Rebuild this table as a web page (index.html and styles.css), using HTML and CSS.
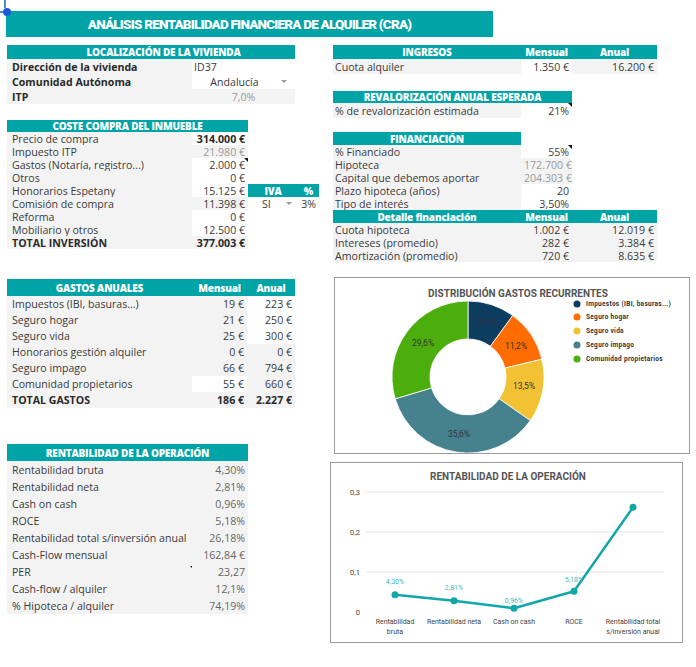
FILE: index.html
```html
<!DOCTYPE html>
<html lang="es">
<head>
  <meta charset="UTF-8">
  <title>Análisis rentabilidad alquiler</title>
  <link rel="stylesheet" href="styles.css">
</head>
<body>
<div class="sheet">
  <!-- selection handle -->
  <svg class="handle" width="14" height="18" viewBox="0 0 14 18">
    <line x1="5" y1="0" x2="5" y2="8" stroke="#1b5ad6" stroke-width="1.5"/>
    <line x1="0" y1="12" x2="3" y2="12" stroke="#1b5ad6" stroke-width="1.5"/>
    <circle cx="7" cy="12" r="4" fill="#1b5ad6"/>
  </svg>

  <h1 class="title">ANÁLISIS RENTABILIDAD FINANCIERA DE ALQUILER (CRA)</h1>

  <div class="main">
    <!-- Left column -->
    <div class="col-left">
      <table class="tbl loc">
        <colgroup><col style="width:185px"><col style="width:103px"></colgroup>
        <tr class="hd"><th colspan="2" class="shift">LOCALIZACIÓN DE LA VIVIENDA</th></tr>
        <tr><td class="lbl bold">Dirección de la vivienda</td><td class="in">ID37</td></tr>
        <tr><td class="lbl bold">Comunidad Autónoma</td><td class="in"><div class="dropdown"><span>Andalucía</span><i class="caret"></i></div></td></tr>
        <tr><td class="lbl bold">ITP</td><td class="calc mid faint">7,0%</td></tr>
      </table>

      <table class="tbl coste">
        <colgroup><col style="width:185px"><col style="width:56px"><col style="width:50px"><col style="width:21px"></colgroup>
        <tr class="hd"><th colspan="2">COSTE COMPRA DEL INMUEBLE</th><td class="blank"></td><td class="blank"></td></tr>
        <tr><td class="lbl">Precio de compra</td><td class="in num bold">314.000 €</td><td class="blank"></td><td class="blank"></td></tr>
        <tr><td class="lbl">Impuesto ITP</td><td class="calc num faint">21.980 €</td><td class="blank"></td><td class="blank"></td></tr>
        <tr><td class="lbl">Gastos (Notaría, registro...)</td><td class="in num note">2.000 €</td><td class="blank"></td><td class="blank"></td></tr>
        <tr><td class="lbl">Otros</td><td class="in num">0 €</td><td class="blank"></td><td class="blank"></td></tr>
        <tr><td class="lbl">Honorarios Espetany</td><td class="in num">15.125 €</td><th>IVA</th><th>%</th></tr>
        <tr><td class="lbl">Comisión de compra</td><td class="calc num">11.398 €</td><td class="blank"><div class="dropdown iva"><span>SI</span><i class="caret"></i></div></td><td class="blank num">3%</td></tr>
        <tr><td class="lbl">Reforma</td><td class="in num">0 €</td><td class="blank"></td><td class="blank"></td></tr>
        <tr><td class="lbl">Mobiliario y otros</td><td class="in num">12.500 €</td><td class="blank"></td><td class="blank"></td></tr>
        <tr><td class="lbl bold">TOTAL INVERSIÓN</td><td class="calc num bold">377.003 €</td><td class="blank"></td><td class="blank"></td></tr>
      </table>

      <table class="tbl gastos">
        <colgroup><col style="width:185px"><col style="width:55px"><col style="width:48px"></colgroup>
        <tr class="hd"><th>GASTOS ANUALES</th><th>Mensual</th><th>Anual</th></tr>
        <tr><td class="lbl">Impuestos (IBI, basuras...)</td><td class="calc num">19 €</td><td class="in num">223 €</td></tr>
        <tr><td class="lbl">Seguro hogar</td><td class="calc num">21 €</td><td class="in num">250 €</td></tr>
        <tr><td class="lbl">Seguro vida</td><td class="calc num">25 €</td><td class="in num">300 €</td></tr>
        <tr><td class="lbl">Honorarios gestión alquiler</td><td class="calc num">0 €</td><td class="calc num">0 €</td></tr>
        <tr><td class="lbl">Seguro impago</td><td class="calc num">66 €</td><td class="calc num">794 €</td></tr>
        <tr><td class="lbl">Comunidad propietarios</td><td class="in num">55 €</td><td class="calc num">660 €</td></tr>
        <tr><td class="lbl bold">TOTAL GASTOS</td><td class="calc num bold">186 €</td><td class="calc num bold">2.227 €</td></tr>
      </table>

      <table class="tbl rent">
        <colgroup><col style="width:185px"><col style="width:56px"></colgroup>
        <tr class="hd"><th colspan="2">RENTABILIDAD DE LA OPERACIÓN</th></tr>
        <tr><td class="lbl">Rentabilidad bruta</td><td class="calc num soft">4,30%</td></tr>
        <tr><td class="lbl">Rentabilidad neta</td><td class="calc num soft">2,81%</td></tr>
        <tr><td class="lbl">Cash on cash</td><td class="calc num soft">0,96%</td></tr>
        <tr><td class="lbl">ROCE</td><td class="calc num soft">5,18%</td></tr>
        <tr><td class="lbl">Rentabilidad total s/inversión anual</td><td class="calc num soft">26,18%</td></tr>
        <tr><td class="lbl">Cash-Flow mensual</td><td class="calc num soft">162,84 €</td></tr>
        <tr><td class="lbl note">PER</td><td class="calc num soft">23,27</td></tr>
        <tr><td class="lbl">Cash-flow / alquiler</td><td class="calc num soft">12,1%</td></tr>
        <tr><td class="lbl">% Hipoteca / alquiler</td><td class="calc num soft">74,19%</td></tr>
      </table>
    </div>

    <!-- Right column -->
    <div class="col-right">
      <table class="tbl ingresos">
        <colgroup><col style="width:188px"><col style="width:51px"><col style="width:85px"></colgroup>
        <tr class="hd"><th>INGRESOS</th><th>Mensual</th><th>Anual</th></tr>
        <tr><td class="lbl">Cuota alquiler</td><td class="in num">1.350 €</td><td class="calc num">16.200 €</td></tr>
      </table>

      <table class="tbl reval">
        <colgroup><col style="width:188px"><col style="width:51px"></colgroup>
        <tr class="hd"><th colspan="2">REVALORIZACIÓN ANUAL ESPERADA</th></tr>
        <tr><td class="lbl">% de revalorización estimada</td><td class="in num note">21%</td></tr>
      </table>

      <table class="tbl finan">
        <colgroup><col style="width:188px"><col style="width:51px"><col style="width:85px"></colgroup>
        <tr class="hd"><th>FINANCIACIÓN</th><td class="blank"></td><td class="blank"></td></tr>
        <tr><td class="lbl">% Financiado</td><td class="in num note">55%</td><td class="blank"></td></tr>
        <tr><td class="lbl">Hipoteca</td><td class="calc num faint">172.700 €</td><td class="blank"></td></tr>
        <tr><td class="lbl">Capital que debemos aportar</td><td class="calc num faint">204.303 €</td><td class="blank"></td></tr>
        <tr><td class="lbl">Plazo hipoteca (años)</td><td class="in num">20</td><td class="blank"></td></tr>
        <tr><td class="lbl">Tipo de interés</td><td class="in num">3,50%</td><td class="blank"></td></tr>
        <tr class="hd"><th>Detalle financiación</th><th>Mensual</th><th>Anual</th></tr>
        <tr><td class="lbl">Cuota hipoteca</td><td class="calc num">1.002 €</td><td class="calc num">12.019 €</td></tr>
        <tr><td class="lbl">Intereses (promedio)</td><td class="calc num">282 €</td><td class="calc num">3.384 €</td></tr>
        <tr><td class="lbl">Amortización (promedio)</td><td class="calc num">720 €</td><td class="calc num">8.635 €</td></tr>
      </table>

      <div class="chart pie">
        <svg width="354" height="175" viewBox="0 0 354 175">
          <text x="183" y="19" class="chart-title" text-anchor="middle">DISTRIBUCIÓN GASTOS RECURRENTES</text>
          <g stroke="#fff" stroke-width="0.8">
            <path d="M133,23 A76,76 0 0 1 177.73,37.55 L155.36,68.28 A38,38 0 0 0 133,61 Z" fill="#0d3c61"/>
            <path d="M177.73,37.55 A76,76 0 0 1 206.89,81.21 L169.94,90.10 A38,38 0 0 0 155.36,68.28 Z" fill="#ff6d01"/>
            <path d="M206.89,81.21 A76,76 0 0 1 195.29,142.55 L164.14,120.77 A38,38 0 0 0 169.94,90.10 Z" fill="#f3c234"/>
            <path d="M195.29,142.55 A76,76 0 0 1 60.20,120.83 L96.60,109.91 A38,38 0 0 0 164.14,120.77 Z" fill="#46818e"/>
            <path d="M60.20,120.83 A76,76 0 0 1 133,23 L133,61 A38,38 0 0 0 96.60,109.91 Z" fill="#4cae0c"/>
          </g>
          <g class="slice-lbl" text-anchor="middle">
            <text x="151" y="47">10,0%</text>
            <text x="181" y="71">11,2%</text>
            <text x="189" y="111">13,5%</text>
            <text x="124" y="159">35,6%</text>
            <text x="88" y="68">29,6%</text>
          </g>
          <g class="legend">
            <circle cx="242" cy="26" r="3.5" fill="#0d3c61"/><text x="251" y="28">Impuestos (IBI, basuras...)</text>
            <circle cx="242" cy="39" r="3.5" fill="#ff6d01"/><text x="251" y="41">Seguro hogar</text>
            <circle cx="242" cy="53" r="3.5" fill="#f3c234"/><text x="251" y="55">Seguro vida</text>
            <circle cx="242" cy="67" r="3.5" fill="#46818e"/><text x="251" y="69">Seguro impago</text>
            <circle cx="242" cy="81" r="3.5" fill="#4cae0c"/><text x="251" y="83">Comunidad propietarios</text>
          </g>
        </svg>
      </div>

      <div class="chart line">
        <svg width="351" height="179" viewBox="0 0 351 179">
          <text x="177" y="17" class="chart-title" text-anchor="middle">RENTABILIDAD DE LA OPERACIÓN</text>
          <g stroke="#e4e4e4" stroke-width="1">
            <line x1="35" y1="29" x2="333" y2="29"/>
            <line x1="35" y1="69" x2="333" y2="69"/>
            <line x1="35" y1="109" x2="333" y2="109"/>
          </g>
          <g class="axis" text-anchor="end">
            <text x="29" y="32">0,3</text>
            <text x="29" y="72">0,2</text>
            <text x="29" y="112">0,1</text>
            <text x="29" y="152">0</text>
          </g>
          <polyline points="64,131.8 123,137.8 183,145.2 243,128.3 302,44.3" fill="none" stroke="#11a7a8" stroke-width="2.5" stroke-linejoin="round"/>
          <g fill="#11a7a8">
            <circle cx="64" cy="131.8" r="3.5"/>
            <circle cx="123" cy="137.8" r="3.5"/>
            <circle cx="183" cy="145.2" r="3.5"/>
            <circle cx="243" cy="128.3" r="3.5"/>
            <circle cx="302" cy="44.3" r="3.5"/>
          </g>
          <g class="point-lbl" text-anchor="middle">
            <text x="64" y="121">4,30%</text>
            <text x="123" y="127">2,81%</text>
            <text x="183" y="140">0,96%</text>
            <text x="243" y="119">5,18%</text>
          </g>
          <g class="axis cat" text-anchor="middle">
            <text x="64" y="161">Rentabilidad</text>
            <text x="64" y="171">bruta</text>
            <text x="123" y="161">Rentabilidad neta</text>
            <text x="183" y="161">Cash on cash</text>
            <text x="243" y="161">ROCE</text>
            <text x="302" y="161">Rentabilidad total</text>
            <text x="302" y="171">s/inversión anual</text>
          </g>
        </svg>
      </div>
    </div>
  </div>
</div>
</body>
</html>
```

FILE: styles.css
```css
body {
  margin: 0;
  font-family: "Open Sans", Arial, sans-serif;
  color: #3a3a3a;
  background: #fff;
}

.sheet {
  position: relative;
  padding-top: 11px;
}

.handle {
  position: absolute;
  top: 0;
  left: 0;
}

.title {
  margin: 0 0 0 6px;
  width: 487px;
  height: 26px;
  line-height: 26px;
  background: #00a4a6;
  color: white;
  font-family: Roboto, Arial, sans-serif;
  font-size: 13.5px;
  font-weight: 900;
  text-align: center;
  letter-spacing: -0.8px;
}

.main {
  display: flex;
  padding-left: 7px;
}

.col-left {
  width: 323px;
  display: flex;
  flex-direction: column;
  align-items: flex-start;
}

.col-right {
  display: flex;
  flex-direction: column;
  align-items: flex-start;
}

/* tables */
.tbl {
  border-collapse: collapse;
  table-layout: fixed;
  font-size: 10.6px;
  line-height: 12px;
}

.tbl td,
.tbl th {
  padding: 0 3px;
  white-space: nowrap;
  overflow: hidden;
}

.tbl th {
  background: #00a4a6;
  color: white;
  font-weight: 800;
  font-size: 10px;
  letter-spacing: -0.2px;
  text-align: center;
}

.tbl .lbl {
  background: #f3f3f3;
  padding-left: 5px;
}

.tbl .calc {
  background: #f3f3f3;
}

.tbl .in {
  background: white;
}

.tbl .blank {
  background: white;
}

.num {
  text-align: right;
}

.mid {
  text-align: center;
}

.bold {
  font-weight: 700;
  color: #2a2a2a;
}

.faint {
  color: #9a9a9a;
}

.soft {
  color: #666;
}

.shift {
  padding-left: 28px !important;
}

.note {
  position: relative;
}

.note::after {
  content: "";
  position: absolute;
  top: 0;
  right: 0;
  border-top: 4px solid #111;
  border-left: 4px solid transparent;
}

.dropdown {
  display: flex;
  align-items: center;
}

.dropdown span {
  flex: 1;
  text-align: center;
}

.caret {
  width: 0;
  height: 0;
  margin: 0 5px 0 6px;
  border-left: 3px solid transparent;
  border-right: 3px solid transparent;
  border-top: 3px solid #999;
}

.dropdown.iva span {
  text-align: left;
  padding-left: 11px;
}

.dropdown.iva .caret {
  margin: 0 3px 0 0;
}

/* left tables */
.loc {
  width: 288px;
  margin-top: 8px;
}

.loc tr { height: 15px; }
.loc tr.hd { height: 14px; }
.loc td.in { padding-left: 2px; }

.coste {
  width: 312px;
  margin-top: 16px;
}

.coste tr { height: 13px; }
.coste tr.hd { height: 12px; }

.gastos {
  width: 288px;
  margin-top: 30px;
}

.gastos tr { height: 16px; }
.gastos tr.hd { height: 17px; }

.rent {
  width: 241px;
  margin-top: 36px;
}

.rent tr { height: 17px; }

.rent .note::after {
  top: 3px;
  right: -2px;
}

/* right tables */
.col-right .tbl .lbl {
  padding-left: 2px;
}

.ingresos {
  width: 324px;
  margin: 8px 0 0 3px;
}

.ingresos tr { height: 15px; }
.ingresos tr.hd { height: 14px; }

.reval {
  width: 239px;
  margin: 17px 0 0 3px;
}

.reval tr { height: 15px; }
.reval tr.hd { height: 12px; }

.finan {
  width: 324px;
  margin: 14px 0 0 3px;
}

.finan tr { height: 13px; }

/* charts */
.chart {
  border: 1px solid #9e9e9e;
  background: white;
}

.chart svg {
  display: block;
  font-family: Roboto, Arial, sans-serif;
}

.pie {
  width: 354px;
  height: 175px;
  margin: 15px 0 0 4px;
}

.line {
  width: 351px;
  height: 179px;
  margin-top: 8px;
}

.chart-title {
  font-size: 10px;
  font-weight: 700;
  fill: #555;
}

.slice-lbl {
  font-size: 8.5px;
  fill: #333;
}

.legend text {
  font-size: 6.5px;
  font-weight: 700;
  letter-spacing: 0.3px;
  fill: #333;
}

.axis {
  font-size: 7.5px;
  fill: #444;
}

.axis.cat {
  font-size: 7px;
}

.point-lbl {
  font-size: 7px;
  fill: #3cbcbc;
}
```
